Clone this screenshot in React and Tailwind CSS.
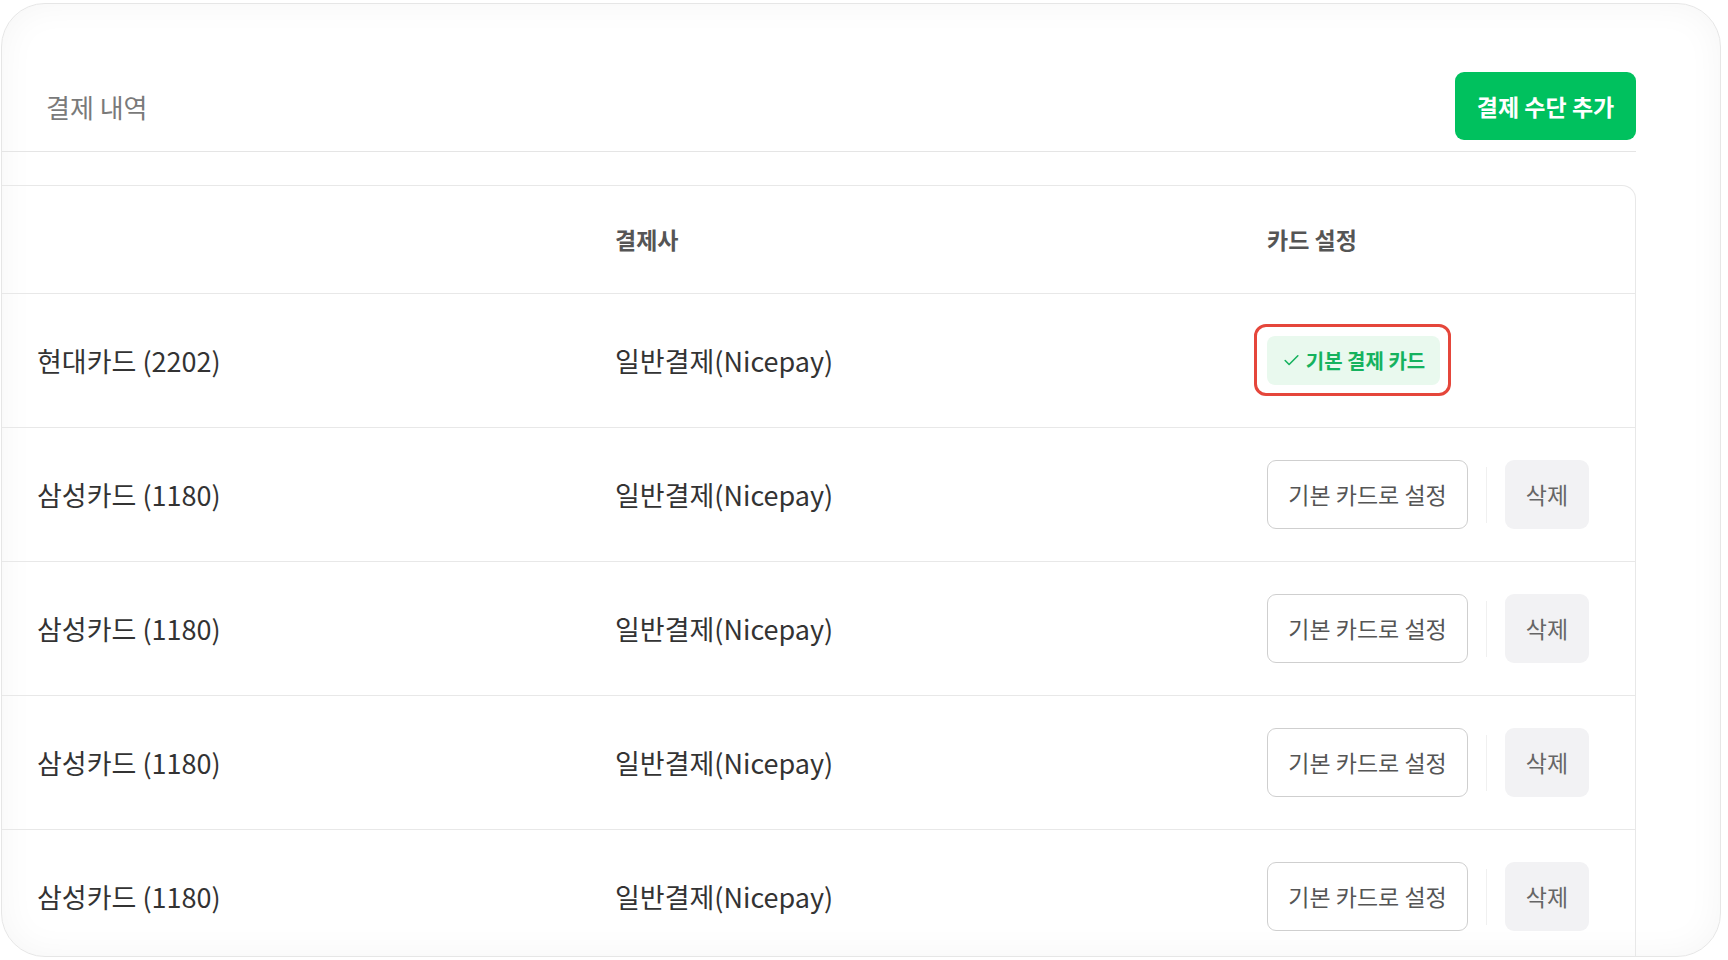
import { Check } from 'lucide-react'

const rows = [
  { name: '현대카드 (2202)', pg: '일반결제(Nicepay)', isDefault: true },
  { name: '삼성카드 (1180)', pg: '일반결제(Nicepay)' },
  { name: '삼성카드 (1180)', pg: '일반결제(Nicepay)' },
  { name: '삼성카드 (1180)', pg: '일반결제(Nicepay)' },
  { name: '삼성카드 (1180)', pg: '일반결제(Nicepay)' },
]

function DefaultBadge() {
  return (
    <div className="relative inline-flex">
      <div className="flex h-[49px] w-[173px] items-center justify-center gap-[5px] rounded-[8px] bg-[#e9f9ee] text-[20px] font-semibold text-[#15b25e]">
        <Check size={19} strokeWidth={2} />
        <span>기본 결제 카드</span>
      </div>
      <div className="pointer-events-none absolute -left-[13px] -right-[11px] -top-[12px] -bottom-[11px] rounded-[12px] border-[3px] border-[#e5463b]" />
    </div>
  )
}

function CardActions() {
  return (
    <div className="flex items-center">
      <button className="flex h-[69px] w-[201px] items-center justify-center rounded-[9px] border-[1.5px] border-[#cfcfcf] bg-white text-[23px] text-[#555]">
        기본 카드로 설정
      </button>
      <div className="mx-[18px] h-[56px] w-px bg-[#f0f0f0]" />
      <button className="flex h-[69px] w-[84px] items-center justify-center rounded-[9px] bg-[#f2f2f4] text-[23px] text-[#666]">
        삭제
      </button>
    </div>
  )
}

export default function App() {
  return (
    <div
      className="h-[960px] w-[1728px] overflow-hidden bg-white pb-[3px] pl-px pr-[7px] pt-[3px]"
      style={{ fontFamily: '"Noto Sans CJK KR", "Noto Sans", sans-serif' }}
    >
      <div className="h-full overflow-hidden rounded-[44px] border border-[#e6e6e6] bg-white shadow-[inset_0_0_36px_rgba(0,0,0,0.045)]">
        <div className="w-[1634px]">
          <header className="flex items-center justify-between border-b border-[#e5e5e5] pb-[11px] pl-[44px] pt-[68px]">
            <h1 className="text-[26px] text-[#7a7a7a]">결제 내역</h1>
            <button className="flex h-[68px] w-[181px] items-center justify-center rounded-[9px] bg-[#00c15e] text-[23px] font-bold text-white">
              결제 수단 추가
            </button>
          </header>

          <div className="mt-[33px] rounded-tr-[14px] border-r border-t border-[#e8e8e8]">
            <div className="grid h-[108px] grid-cols-[578px_652px_1fr] items-center border-b border-[#e8e8e8] pl-[35px] text-[23px] font-bold text-[#555]">
              <div />
              <div>결제사</div>
              <div>카드 설정</div>
            </div>
            {rows.map((r, i) => (
              <div
                key={i}
                className="grid h-[134px] grid-cols-[578px_652px_1fr] items-center border-b border-[#e8e8e8] pl-[35px] pt-[2px] text-[27px] text-[#333]"
              >
                <div>{r.name}</div>
                <div>{r.pg}</div>
                <div className="-mt-[2px]">{r.isDefault ? <DefaultBadge /> : <CardActions />}</div>
              </div>
            ))}
          </div>
        </div>
      </div>
    </div>
  )
}
